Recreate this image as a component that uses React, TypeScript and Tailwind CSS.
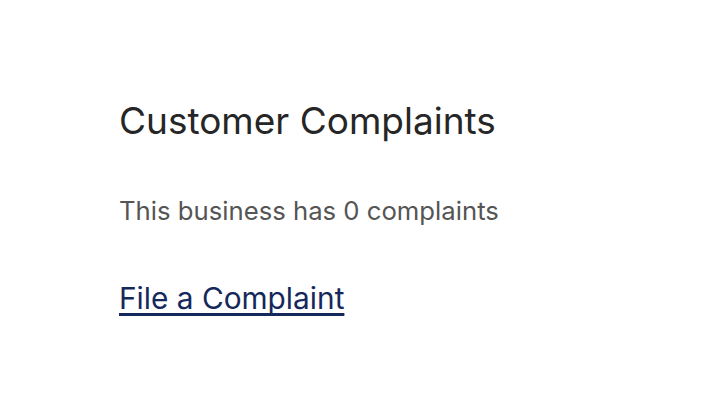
export default function App() {
  return (
    <div className="min-h-[412px] w-[720px] bg-white font-['Inter',sans-serif]">
      <div className="flex flex-col items-start pl-[119px] pt-[97px]">
        <h2 className="text-[37px] font-normal leading-[48px] text-[#262626]">
          Customer Complaints
        </h2>
        <p className="mt-[50px] text-[25.7px] leading-[32px] text-[#555555]">
          This business has 0 complaints
        </p>
        <a
          href="#"
          className="mt-[53px] text-[29.8px] leading-[36px] text-[#15285c] underline underline-offset-[4px] decoration-[3px] [text-decoration-skip-ink:none]"
        >
          File a Complaint
        </a>
      </div>
    </div>
  );
}
